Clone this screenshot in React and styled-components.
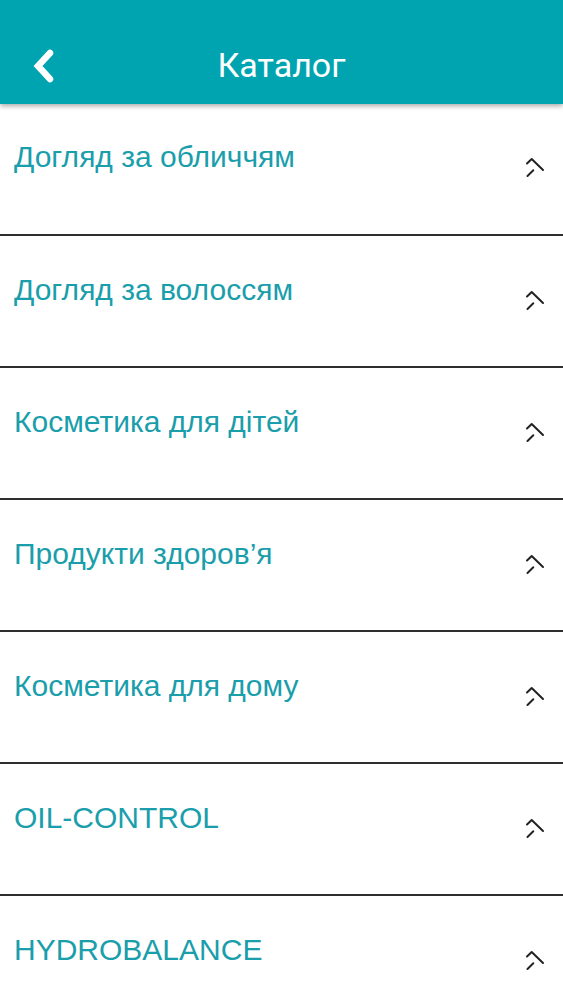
import React from 'react';
import styled, { createGlobalStyle } from 'styled-components';

const GlobalStyle = createGlobalStyle`
    html, body {
        margin: 0;
        padding: 0;
        background: #ffffff;
    }
    * {
        box-sizing: border-box;
    }
`;

const Page = styled.div`
    width: 563px;
    height: 1000px;
    overflow: hidden;
    background: #ffffff;
`;

const Header = styled.header`
    position: relative;
    z-index: 2;
    height: 104px;
    background: #00a4b0;
    display: flex;
    align-items: center;
    justify-content: center;
    box-shadow: 0 2px 5px rgba(0, 0, 0, 0.35);
`;

const BackButton = styled.button`
    position: absolute;
    left: 27px;
    top: 44px;
    width: 34px;
    height: 44px;
    padding: 0;
    border: none;
    background: transparent;
    display: flex;
    align-items: center;
    justify-content: center;
    cursor: pointer;
`;

const Title = styled.h1`
    margin: 0;
    padding-top: 26px;
    padding-left: 0;
    font-family: Roboto, 'Noto Sans', sans-serif;
    font-weight: 400;
    font-size: 34px;
    color: #ffffff;
`;

const List = styled.ul`
    list-style: none;
    margin: 0;
    padding: 0;
`;

const Row = styled.li`
    height: 132px;
    border-bottom: 2px solid #2e2e2e;
    display: flex;
    justify-content: space-between;
    padding: ${(p) => (p.first ? '37px' : '38px')} 14px 0 14px;
    cursor: pointer;
`;

const Label = styled.span`
    font-family: 'Liberation Sans', Arial, sans-serif;
    font-size: 30px;
    line-height: 32px;
    color: #1a9eab;
`;

const Arrow = styled.svg`
    flex: none;
    margin-top: 15px;
    margin-right: 4px;
`;

const items = [
    'Догляд за обличчям',
    'Догляд за волоссям',
    'Косметика для дітей',
    'Продукти здоров’я',
    'Косметика для дому',
    'OIL-CONTROL',
    'HYDROBALANCE',
];

function RowArrow() {
    return (
        <Arrow width="20" height="24" viewBox="0 0 20 24">
            <path
                d="M2 7.5 L6.7 3 L18 14"
                fill="none"
                stroke="#222"
                strokeWidth="2"
                strokeLinecap="round"
                strokeLinejoin="round"
            />
            <path d="M2.5 20 L8.3 14.3" fill="none" stroke="#222" strokeWidth="2" strokeLinecap="round" />
        </Arrow>
    );
}

export default function App() {
    return (
        <Page>
            <GlobalStyle />
            <Header>
                <BackButton aria-label="Назад">
                    <svg width="24" height="34" viewBox="0 0 24 34">
                        <polyline
                            points="18,4 6,17 18,30"
                            fill="none"
                            stroke="#ffffff"
                            strokeWidth="6.5"
                            strokeLinecap="round"
                            strokeLinejoin="miter"
                        />
                    </svg>
                </BackButton>
                <Title>Каталог</Title>
            </Header>
            <List>
                {items.map((item, i) => (
                    <Row key={item} first={i === 0}>
                        <Label>{item}</Label>
                        <RowArrow />
                    </Row>
                ))}
            </List>
        </Page>
    );
}
